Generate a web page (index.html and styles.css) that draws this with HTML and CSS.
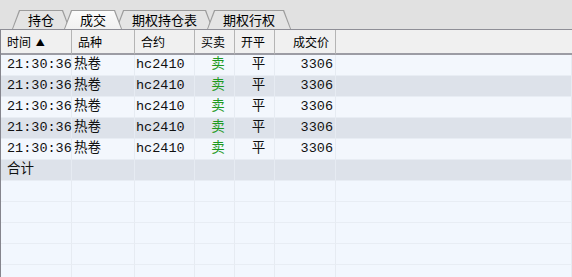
FILE: index.html
```html
<!DOCTYPE html>
<html lang="zh-CN">
<head>
  <meta charset="UTF-8">
  <title>成交</title>
  <link rel="stylesheet" href="styles.css">
</head>
<body>

<div class="tabs">
  <div class="tab">持仓</div>
  <div class="tab active">成交</div>
  <div class="tab">期权持仓表</div>
  <div class="tab">期权行权</div>
</div>

<div class="grid">
  <table>
    <colgroup>
      <col class="c-time">
      <col class="c-name">
      <col class="c-code">
      <col class="c-dir">
      <col class="c-oc">
      <col class="c-price">
      <col>
    </colgroup>
    <thead>
      <tr>
        <th>时间 <span class="sort">▲</span></th>
        <th>品种</th>
        <th>合约</th>
        <th>买卖</th>
        <th>开平</th>
        <th class="num">成交价</th>
        <th class="last"></th>
      </tr>
    </thead>
    <tbody id="rows"></tbody>
  </table>
</div>

<script>
  const trades = [
    { time: "21:30:36", name: "热卷", code: "hc2410", dir: "卖", oc: "平", price: 3306 },
    { time: "21:30:36", name: "热卷", code: "hc2410", dir: "卖", oc: "平", price: 3306 },
    { time: "21:30:36", name: "热卷", code: "hc2410", dir: "卖", oc: "平", price: 3306 },
    { time: "21:30:36", name: "热卷", code: "hc2410", dir: "卖", oc: "平", price: 3306 },
    { time: "21:30:36", name: "热卷", code: "hc2410", dir: "卖", oc: "平", price: 3306 },
  ];

  const rows = document.getElementById("rows");

  trades.forEach(t => {
    const tr = document.createElement("tr");
    tr.innerHTML = `
      <td class="time">${t.time}</td>
      <td class="name">${t.name}</td>
      <td class="code">${t.code}</td>
      <td class="dir ${t.dir === "卖" ? "sell" : "buy"}">${t.dir}</td>
      <td class="oc">${t.oc}</td>
      <td class="num">${t.price}</td>
      <td></td>
    `;
    rows.appendChild(tr);
  });

  // total + empty filler rows
  const total = document.createElement("tr");
  total.innerHTML = `<td class="time">合计</td><td></td><td></td><td></td><td></td><td></td><td></td>`;
  rows.appendChild(total);

  for (let i = 0; i < 5; i++) {
    const tr = document.createElement("tr");
    tr.className = "empty";
    tr.innerHTML = "<td></td>".repeat(7);
    rows.appendChild(tr);
  }
</script>

</body>
</html>
```

FILE: styles.css
```css
html, body {
  margin: 0;
  height: 100%;
}
body {
  background: #f2f7fe;
  font-family: "Noto Sans CJK SC", sans-serif;
  color: #000;
  overflow: hidden;
}

/* tabs */
.tabs {
  display: flex;
  height: 30px;
  padding-left: 12px;
  background: #e1e1e1;
  border-bottom: 1px solid #8e8e96;
  box-sizing: border-box;
  align-items: flex-end;
}
.tab {
  position: relative;
  z-index: 1;
  height: 19px;
  line-height: 19px;
  padding: 0 16px;
  margin-right: -6px;
  font-size: 13px;
}
.tab::before,
.tab::after {
  content: "";
  position: absolute;
  z-index: -1;
  clip-path: polygon(0 100%, 7px 0, calc(100% - 7px) 0, 100% 100%);
}
.tab::before {
  inset: 0;
  background: #9c9c9c;
}
.tab::after {
  inset: 1px 1px 0 1px;
  background: #e4e4e4;
}
.tab.active {
  z-index: 2;
}
.tab.active::after {
  background: linear-gradient(#fbfbfb, #f1f1f1);
}

/* grid */
.grid {
  border-left: 1px solid #85858d;
  height: calc(100% - 30px);
  overflow: hidden;
}
table {
  width: 100%;
  table-layout: fixed;
  border-collapse: separate;
  border-spacing: 0;
}
.c-time { width: 71px; }
.c-name { width: 63px; }
.c-code { width: 60px; }
.c-dir { width: 40px; }
.c-oc { width: 40px; }
.c-price { width: 61px; }

th {
  height: 23px;
  padding: 0 0 0 6px;
  background: #f0f0f0;
  border-right: 1px solid #b4b4b4;
  border-bottom: 2px solid #9c9ca4;
  font-size: 12px;
  font-weight: normal;
  text-align: left;
  white-space: nowrap;
  overflow: hidden;
}
th.num {
  text-align: right;
  padding: 0 6px 0 0;
}
th.last {
  border-right: none;
}
.sort {
  font-size: 9px;
  vertical-align: 1px;
  margin-left: 2px;
}

td {
  height: 20px;
  padding: 0 0 0 1px;
  border-right: 1px solid #e6ebf2;
  border-bottom: 1px solid #e8edf4;
  font-family: "Liberation Mono", "Noto Sans CJK SC", monospace;
  font-size: 13.5px;
  line-height: 20px;
  color: #111;
  white-space: nowrap;
  overflow: visible;
}
tbody tr {
  background: #f3f7fd;
}
tbody tr:nth-child(even) {
  background: #dde2ea;
}
tbody tr.empty {
  background: #f2f7fe;
}
td.time {
  padding-left: 6px;
}
td.name {
  padding-left: 2px;
}
td.dir {
  text-align: center;
  padding-left: 7px;
}
td.oc {
  text-align: center;
  padding-left: 8px;
}
td.num {
  text-align: right;
  padding: 0 2px 0 0;
}
.sell {
  color: #1f9a1f;
}
.buy {
  color: #d02020;
}
```
